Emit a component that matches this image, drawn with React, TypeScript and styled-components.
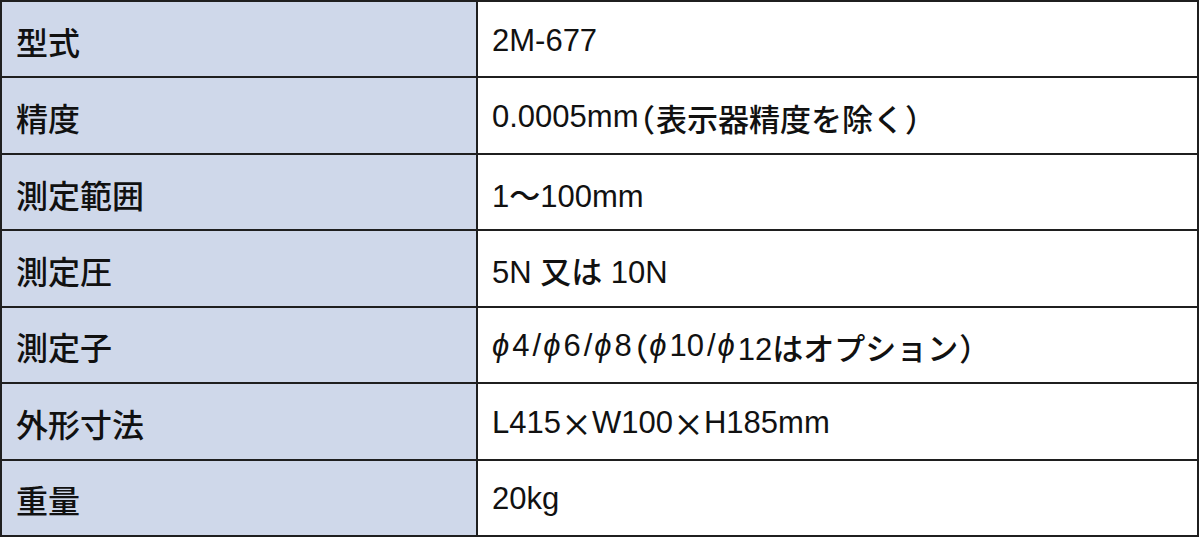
import React from "react";
import styled, { createGlobalStyle } from "styled-components";

const Global = createGlobalStyle`
  html, body { margin: 0; padding: 0; background: #ffffff; }
  body { font-family: "Liberation Sans", "Noto Sans CJK JP", sans-serif; }
`;

const Table = styled.div`
  width: 1199px;
  height: 537px;
  box-sizing: border-box;
  display: grid;
  grid-template-columns: 474px 1fr;
  grid-template-rows: repeat(7, 1fr);
  gap: 2px;
  padding: 2px;
  background: #1f1f1f;
`;

const Cell = styled.div<{ $head?: boolean }>`
  display: flex;
  align-items: center;
  padding: 3px 0 0 14px;
  background: ${(p) => (p.$head ? "#cfd8ea" : "#ffffff")};
  color: #111111;
  font-family: "Liberation Sans", "Noto Sans CJK JP", sans-serif;
  font-size: ${(p) => (p.$head ? "32px" : "31px")};
  font-weight: 500;
  white-space: pre;
`;

const Phi = styled.span`
  font-family: "Liberation Sans", sans-serif;
  font-style: italic;
  margin-right: 3px;
`;

const Slash = styled.span`
  margin: 0 2px 0 3px;
`;

const Wide = styled.span`
  font-family: "Noto Sans CJK JP", sans-serif;
  font-weight: 500;
`;

const Paren = styled.span`
  font-family: "Noto Sans CJK JP", sans-serif;
  font-feature-settings: "halt";
  margin: 0 1px;
`;

const P = () => <Phi>ϕ</Phi>;
const X = () => <Wide>×</Wide>;
const S = () => <Slash>/</Slash>;

const rows: { label: string; value: React.ReactNode }[] = [
  { label: "型式", value: "2M-677" },
  {
    label: "精度",
    value: (
      <>
        0.0005mm<Paren>（</Paren>表示器精度を除く<Paren>）</Paren>
      </>
    ),
  },
  { label: "測定範囲", value: "1〜100mm" },
  { label: "測定圧", value: "5N 又は 10N" },
  {
    label: "測定子",
    value: (
      <>
        <P />4<S /><P />6<S /><P />8<Paren>（</Paren><P />10<S /><P />12はオプション<Paren>）</Paren>
      </>
    ),
  },
  {
    label: "外形寸法",
    value: (
      <>
        L415<X />W100<X />H185mm
      </>
    ),
  },
  { label: "重量", value: "20kg" },
];

export default function App() {
  return (
    <>
      <Global />
      <Table>
        {rows.map((r) => (
          <React.Fragment key={r.label}>
            <Cell $head>{r.label}</Cell>
            <Cell>{r.value}</Cell>
          </React.Fragment>
        ))}
      </Table>
    </>
  );
}
